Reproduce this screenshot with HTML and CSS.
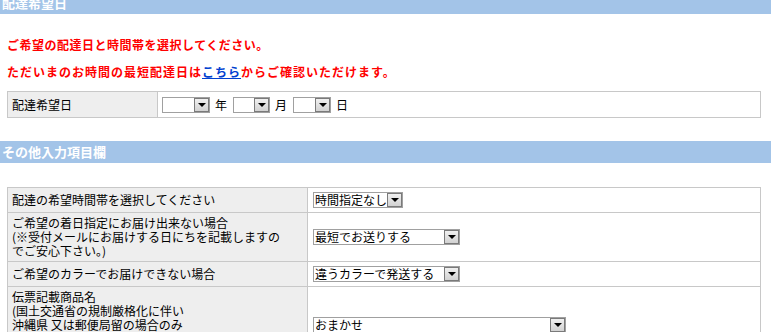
FILE: index.html
```html
<!DOCTYPE html>
<html lang="ja">

<head>
  <meta charset="UTF-8">
  <meta name="viewport" content="width=device-width, initial-scale=1.0">
  <title>配達希望日</title>
  <link rel="stylesheet" href="styles.css">
</head>

<body>
  <div class="page">
    <h2 class="bar bar-top">配達希望日</h2>

    <div class="notice">
      <p>ご希望の配達日と時間帯を選択してください。</p>
      <p class="wide">ただいまのお時間の最短配達日は<a href="#">こちら</a>からご確認いただけます。</p>
    </div>

    <table class="form form-date">
      <tr>
        <th>配達希望日</th>
        <td>
          <div class="date-fields">
            <span class="sel w-year"><select><option></option></select><span class="btn"></span></span>
            <span class="unit">年</span>
            <span class="sel w-month"><select><option></option></select><span class="btn"></span></span>
            <span class="unit">月</span>
            <span class="sel w-day"><select><option></option></select><span class="btn"></span></span>
            <span class="unit">日</span>
          </div>
        </td>
      </tr>
    </table>

    <h2 class="bar bar-sub">その他入力項目欄</h2>

    <table class="form form-other">
      <tr>
        <th>配達の希望時間帯を選択してください</th>
        <td>
          <span class="sel w-time"><select><option>時間指定なし</option></select><span class="btn"></span></span>
        </td>
      </tr>
      <tr>
        <th>ご希望の着日指定にお届け出来ない場合<br>(※受付メールにお届けする日にちを記載しますの<br>でご安心下さい。)</th>
        <td>
          <span class="sel w-mid"><select><option>最短でお送りする</option></select><span class="btn"></span></span>
        </td>
      </tr>
      <tr>
        <th>ご希望のカラーでお届けできない場合</th>
        <td>
          <span class="sel w-mid"><select><option>違うカラーで発送する</option></select><span class="btn"></span></span>
        </td>
      </tr>
      <tr>
        <th>伝票記載商品名<br>(国土交通省の規制厳格化に伴い<br>沖縄県 又は郵便局留の場合のみ<br>商品名を「雑貨」と記載させて<br>いただきます。)</th>
        <td>
          <span class="sel w-long"><select><option>おまかせ</option></select><span class="btn"></span></span>
        </td>
      </tr>
    </table>
  </div>
</body>

</html>
```

FILE: styles.css
```css
* {
  margin: 0;
  padding: 0;
  box-sizing: border-box;
}

body {
  font-family: "Noto Sans CJK JP", "Noto Sans", sans-serif;
  font-size: 12px;
  line-height: 14px;
  color: #000;
  background-color: #fff;
}

.page {
  width: 771px;
}

.bar {
  height: 22px;
  padding-left: 2px;
  font-size: 13px;
  font-weight: bold;
  line-height: 22px;
  color: #fff;
  background-color: #a3c4e8;
}

.bar-top {
  margin-top: -8px;
}

.bar-sub {
  margin-top: 23px;
}

.notice {
  padding: 23px 0 0 7px;
}

.notice p {
  font-weight: bold;
  line-height: 16px;
  letter-spacing: 0.5px;
  color: #f00;
}

.notice p + p {
  margin-top: 11px;
}

.notice .wide {
  letter-spacing: 1px;
}

.notice a {
  color: #0040d0;
  text-decoration: underline;
}

.form {
  width: 754px;
  margin-left: 7px;
  border-collapse: collapse;
  border: 1px solid #c8c8c8;
}

.form th,
.form td {
  border: 1px solid #c8c8c8;
  vertical-align: middle;
  text-align: left;
}

.form th {
  padding: 3px 4px;
  font-weight: normal;
  background-color: #eeeeee;
}

.form td {
  padding: 3px 5px;
}

.form-date {
  margin-top: 11px;
}

.form-date th {
  width: 150px;
  height: 26px;
}

.form-date td {
  padding-left: 4px;
}

.form-other {
  margin-top: 24px;
}

.form-other th {
  width: 300px;
  height: 25px;
}

.date-fields {
  display: flex;
  align-items: center;
}

.unit {
  margin: 0 6px 0 5px;
}

/* select box */
.sel {
  position: relative;
  display: inline-block;
  height: 16px;
  vertical-align: middle;
}

.sel select {
  display: block;
  width: 100%;
  height: 16px;
  padding: 0 1px;
  border: 1px solid #a0a0a0;
  border-radius: 0;
  font-family: inherit;
  font-size: 12px;
  line-height: 14px;
  color: #000;
  background-color: #fff;
  appearance: none;
  -webkit-appearance: none;
}

.sel .btn {
  position: absolute;
  top: 1px;
  right: 1px;
  width: 15px;
  height: 14px;
  border: 1px solid #7a7a7a;
  background: linear-gradient(#f0f0f0, #d2d2d2);
  pointer-events: none;
}

.sel .btn::after {
  content: "";
  position: absolute;
  left: 3px;
  top: 4px;
  border-left: 4px solid transparent;
  border-right: 4px solid transparent;
  border-top: 4px solid #000;
}

.w-year {
  width: 48px;
}

.w-month {
  width: 37px;
}

.w-day {
  width: 38px;
}

.w-time {
  width: 90px;
}

.w-mid {
  width: 147px;
}

.w-long {
  width: 253px;
}
```
